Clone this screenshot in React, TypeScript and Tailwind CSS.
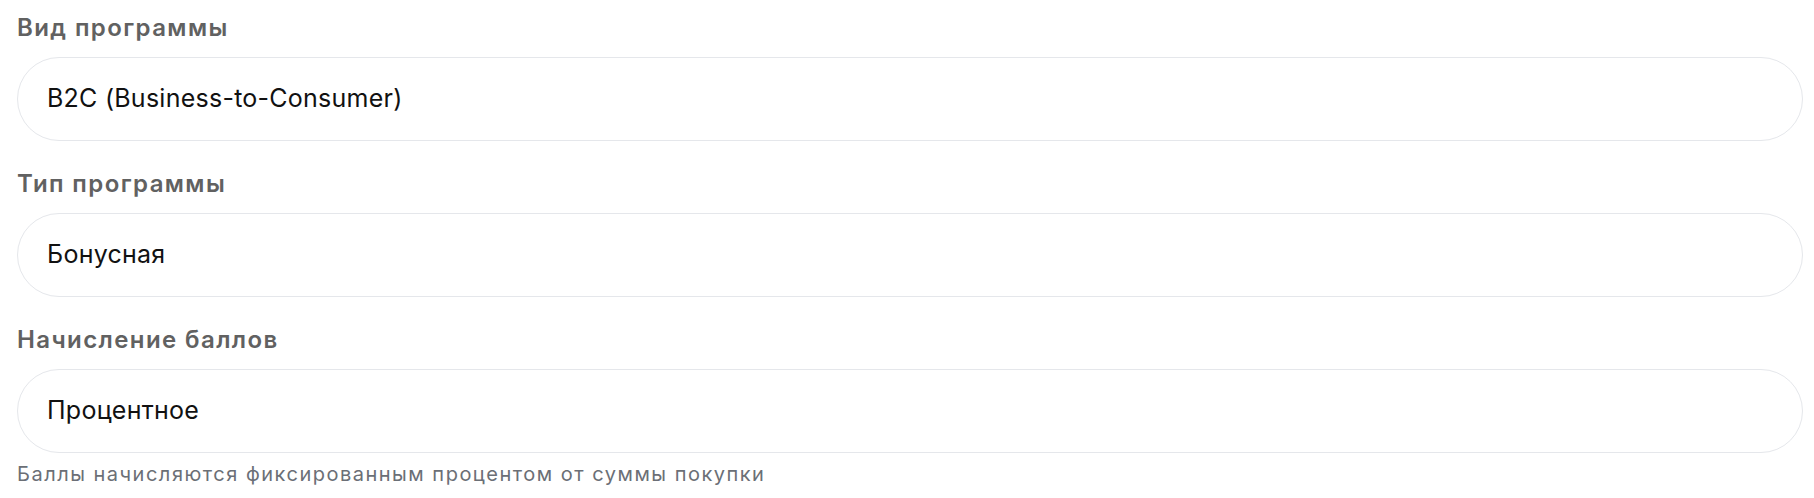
import React from 'react'

const fields = [
  { label: 'Вид программы', value: 'B2C (Business-to-Consumer)' },
  { label: 'Тип программы', value: 'Бонусная' },
  { label: 'Начисление баллов', value: 'Процентное', hint: 'Баллы начисляются фиксированным процентом от суммы покупки' },
]

export default function App() {
  return (
    <div className="min-h-screen bg-white pl-[17px] pr-[11px] pt-[14px] font-['Inter',sans-serif]">
      {fields.map((f, i) => (
        <div key={f.label} className={i > 0 ? 'mt-[29px]' : ''}>
          <div className="text-[24px] leading-[28px] font-semibold tracking-[1.4px] text-[#616161]">{f.label}</div>
          <div className="mt-[15px] flex h-[84px] items-center rounded-full border border-[#e5e7eb] px-[29px] text-[25px] tracking-[0.25px] text-[#111111]">
            {f.value}
          </div>
          {f.hint && (
            <div className="mt-[8px] text-[20px] leading-[26px] tracking-[1.5px] text-[#6b6f76]">{f.hint}</div>
          )}
        </div>
      ))}
    </div>
  )
}
